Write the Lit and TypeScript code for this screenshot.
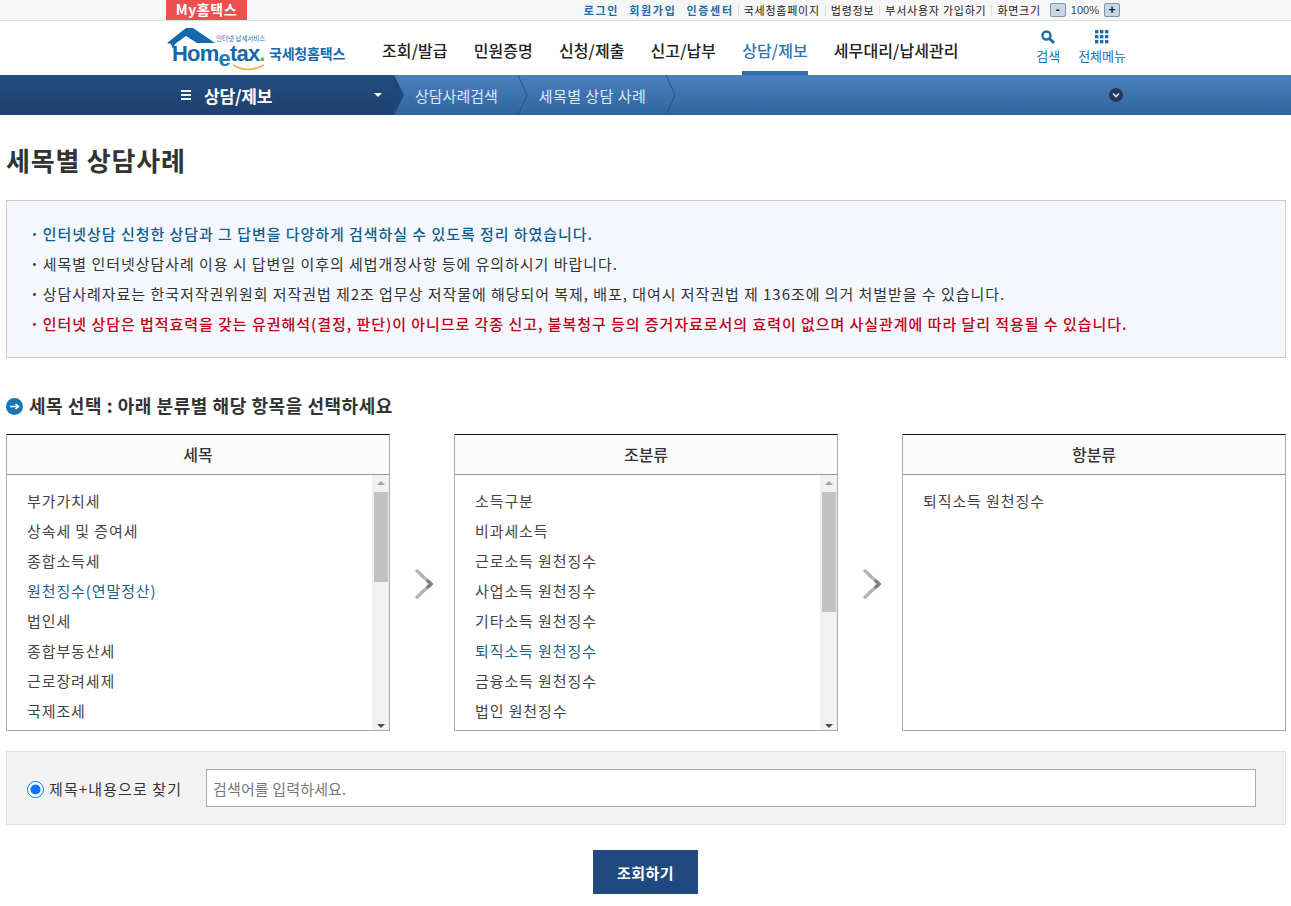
import { LitElement, html, css, svg } from "lit";
import { customElement } from "lit/decorators.js";
import { classMap } from "lit/directives/class-map.js";

const NAV = ["조회/발급", "민원증명", "신청/제출", "신고/납부", "상담/제보", "세무대리/납세관리"];
const NOTES = [
  { text: "인터넷상담 신청한 상담과 그 답변을 다양하게 검색하실 수 있도록 정리 하였습니다.", kind: "blue" },
  { text: "세목별 인터넷상담사례 이용 시 답변일 이후의 세법개정사항 등에 유의하시기 바랍니다.", kind: "" },
  { text: "상담사례자료는 한국저작권위원회 저작권법 제2조 업무상 저작물에 해당되어 복제, 배포, 대여시 저작권법 제 136조에 의거 처벌받을 수 있습니다.", kind: "" },
  { text: "인터넷 상담은 법적효력을 갖는 유권해석(결정, 판단)이 아니므로 각종 신고, 불복청구 등의 증거자료로서의 효력이 없으며 사실관계에 따라 달리 적용될 수 있습니다.", kind: "red" },
];
const PANELS = [
  {
    title: "세목",
    items: ["부가가치세", "상속세 및 증여세", "종합소득세", "원천징수(연말정산)", "법인세", "종합부동산세", "근로장려세제", "국제조세"],
    active: 3,
    thumb: 90,
  },
  {
    title: "조분류",
    items: ["소득구분", "비과세소득", "근로소득 원천징수", "사업소득 원천징수", "기타소득 원천징수", "퇴직소득 원천징수", "금융소득 원천징수", "법인 원천징수"],
    active: 5,
    thumb: 120,
  },
  { title: "항분류", items: ["퇴직소득 원천징수"], active: -1, thumb: 0 },
];

const chevron = svg`<path d="M3 3 L17 16 L3 29" fill="none" stroke="#b4b4b4" stroke-width="3.4" stroke-linecap="round" stroke-linejoin="round"/><path d="M14 13 L17 16 L14 19" fill="none" stroke="#808080" stroke-width="3.4" stroke-linecap="round"/>`;

@customElement("app-root")
export class AppRoot extends LitElement {
  static styles = css`
    :host {
      display: block;
      height: 906px;
      overflow: hidden;
      background: #fff;
      color: #333;
      font-family: "Noto Sans CJK KR", "Noto Sans", sans-serif;
    }

    .wrap {
      width: 960px;
      margin-left: 166px;
      display: flex;
      align-items: center;
    }

    .topbar {
      height: 20px;
      background: #f6f6f6;
      border-bottom: 1px solid #dcdcdc;
    }
    .topbar .wrap {
      height: 20px;
      justify-content: space-between;
    }
    .my {
      width: 81px;
      height: 20px;
      background: #ee5050;
      color: #fff;
      font-size: 14px;
      font-weight: 700;
      line-height: 18px;
      letter-spacing: 0.6px;
      text-align: center;
    }
    .util {
      display: flex;
      align-items: center;
      font-size: 11px;
      line-height: 18px;
      color: #222;
      margin-right: 6px;
      letter-spacing: 0.75px;
      white-space: nowrap;
    }
    .util b {
      color: #1b6ca8;
      font-weight: 700;
      margin-right: 10px;
      letter-spacing: 1.7px;
    }
    .util b:last-of-type {
      margin-right: 4px;
    }
    .util span {
      margin-right: 5px;
      padding-left: 5px;
      border-left: 1px solid #ddd;
      line-height: 11px;
    }
    .util .size {
      margin-right: 9px;
    }
    .zoom {
      width: 16px;
      height: 14px;
      border: 1px solid #7f93ab;
      border-radius: 2px;
      background: #c8d6e5;
      font: 700 12px/12px "Liberation Sans", sans-serif;
      letter-spacing: 0;
      text-align: center;
      color: #123;
      box-sizing: border-box;
    }
    .pct {
      margin: 0 5px;
      color: #444;
      font-size: 11px;
      letter-spacing: 0;
      font-family: "Liberation Sans", sans-serif;
    }

    .header {
      height: 54px;
    }
    .header .wrap {
      height: 54px;
    }
    .logo {
      position: relative;
      width: 180px;
      height: 54px;
      flex: none;
      color: #1668ae;
    }
    .roof {
      position: absolute;
      left: 0;
      top: 6px;
    }
    .slogan {
      position: absolute;
      left: 50px;
      top: 13px;
      font-size: 6.5px;
      line-height: 9px;
      color: #2a6fa8;
      white-space: nowrap;
    }
    .brand {
      position: absolute;
      left: 6px;
      top: 23px;
      font: 700 22px/20px "Liberation Sans", sans-serif;
      letter-spacing: -0.8px;
      white-space: nowrap;
    }
    .brand i {
      font-style: normal;
      color: #1d7ab8;
      position: relative;
      top: 5px;
    }
    .brand u {
      text-decoration: none;
      color: #6fae1e;
    }
    .brand-ko {
      position: absolute;
      left: 103px;
      top: 21px;
      font-size: 14px;
      font-weight: 700;
      line-height: 22px;
      letter-spacing: -0.2px;
      white-space: nowrap;
    }
    .smile {
      position: absolute;
      left: 66px;
      top: 43px;
    }
    .nav {
      display: flex;
      margin-left: 36px;
      height: 54px;
      flex: none;
    }
    .nav a {
      height: 54px;
      box-sizing: border-box;
      margin-right: 26px;
      font-size: 16px;
      font-weight: 500;
      line-height: 58px;
      color: #222;
      white-space: nowrap;
      letter-spacing: 0.1px;
    }
    .nav a.on {
      color: #2f75b5;
      border-bottom: 4px solid #2f6fb0;
    }
    .tools {
      display: flex;
      margin-left: auto;
      gap: 18px;
      font-size: 13px;
      color: #1f6ea8;
      text-align: center;
      line-height: 18px;
      align-self: flex-start;
      padding-top: 8px;
    }
    .tools svg {
      display: block;
      margin: 0 auto 2px;
    }

    .sub {
      height: 40px;
      background: linear-gradient(#4c80bd, #2f659f);
      position: relative;
    }
    .sub-left {
      position: absolute;
      left: 0;
      top: 0;
      width: 394px;
      height: 40px;
      background: linear-gradient(#234d80, #1c406f);
    }
    .sub .wrap {
      position: relative;
      height: 40px;
    }
    .cur {
      display: flex;
      align-items: center;
      width: 228px;
      flex: none;
      color: #fff;
      font-size: 17px;
      font-weight: 700;
      padding-left: 15px;
      box-sizing: border-box;
      letter-spacing: -0.2px;
    }
    .burger {
      width: 10px;
      height: 10px;
      margin-right: 13px;
      border-top: 2px solid #fff;
      border-bottom: 2px solid #fff;
      box-sizing: border-box;
      position: relative;
    }
    .burger::after {
      content: "";
      position: absolute;
      left: 0;
      right: 0;
      top: 2px;
      height: 2px;
      background: #fff;
    }
    .caret {
      margin-left: auto;
      margin-right: 12px;
      border: 4px solid transparent;
      border-top: 4px solid #fff;
      border-bottom: 0;
    }
    .crumb {
      display: flex;
      align-items: center;
      color: #dce8f5;
      font-size: 15px;
      height: 40px;
      white-space: nowrap;
    }
    .crumb svg {
      flex: none;
    }
    .crumb span {
      padding: 0 20px 0 11px;
      letter-spacing: 0.45px;
    }
    .crumb span.first {
      padding-left: 21px;
      letter-spacing: 0;
    }
    .more {
      position: absolute;
      right: 3px;
      top: 13px;
      width: 14px;
      height: 14px;
      border-radius: 50%;
      background: #24395a;
    }
    .more svg {
      display: block;
    }

    main {
      padding: 0 5px 0 6px;
    }
    h1 {
      margin: 0;
      padding-top: 25px;
      height: 60px;
      font-size: 26px;
      font-weight: 700;
      line-height: 40px;
      color: #333;
      letter-spacing: 0.8px;
    }
    .notes {
      height: 156px;
      border: 1px solid #c9ccd2;
      background: #f4f7fb;
      padding: 0 0 0 23px;
      box-sizing: content-box;
      margin: 0;
      list-style: none;
      display: flex;
      flex-direction: column;
      justify-content: center;
      font-size: 15px;
      letter-spacing: 0.95px;
      line-height: 30px;
      color: #333;
    }
    .notes li {
      white-space: nowrap;
    }
    .notes li::before {
      content: "·";
      font-weight: 700;
      margin-right: 3px;
    }
    .notes .blue {
      color: #125f8f;
      font-weight: 500;
    }
    .notes .red {
      color: #c4001a;
      font-weight: 500;
    }
    h2 {
      display: flex;
      align-items: center;
      margin: 35px 0 17px;
      height: 24px;
      font-size: 18px;
      font-weight: 700;
      line-height: 24px;
      color: #333;
      letter-spacing: 0.55px;
    }
    h2 svg {
      margin: 2px 6px 0 0;
    }
    .panels {
      display: grid;
      grid-template-columns: 384px 384px 384px;
      column-gap: 64px;
    }
    .panel {
      position: relative;
      height: 297px;
      box-sizing: border-box;
      border: 1px solid #aaa;
      border-top: 1px solid #111;
    }
    .panel h3 {
      margin: 0;
      height: 40px;
      box-sizing: border-box;
      border-bottom: 1px solid #999;
      background: #fbfbfb;
      font-size: 16px;
      font-weight: 500;
      line-height: 39px;
      text-align: center;
      color: #333;
    }
    .panel ul {
      margin: 0;
      padding: 11px 0 0 20px;
      list-style: none;
      font-size: 15px;
      letter-spacing: 0.9px;
      line-height: 30px;
      color: #444;
    }
    .panel li.on {
      color: #1d6289;
    }
    .scroll {
      position: absolute;
      right: 0;
      top: 40px;
      bottom: 0;
      width: 17px;
      background: #f1f1f1;
      display: flex;
      flex-direction: column;
      align-items: center;
    }
    .arrow {
      width: 0;
      height: 0;
      margin: 6px 0 7px;
      border: 4px solid transparent;
      border-top: 0;
      border-bottom: 4px solid #a3a3a3;
    }
    .arrow.down {
      margin: auto 0 2px;
      border-bottom: 0;
      border-top: 4px solid #505050;
    }
    .thumb {
      width: 14px;
      background: #c1c1c1;
    }
    .next {
      position: absolute;
      left: 100%;
      top: 133px;
      margin-left: 25px;
    }
    .search {
      display: flex;
      align-items: center;
      height: 74px;
      box-sizing: border-box;
      margin-top: 20px;
      border: 1px solid #e2e2e2;
      background: #f3f3f3;
      padding: 0 29px 0 20px;
      font-size: 15px;
      letter-spacing: 1.1px;
      color: #333;
    }
    .search input[type="radio"] {
      width: 17px;
      height: 17px;
      margin: 3px 5px 0 0;
      accent-color: #0a75ff;
    }
    .search label {
      width: 157px;
      flex: none;
      white-space: nowrap;
    }
    .search input[type="text"] {
      flex: 1;
      height: 38px;
      box-sizing: border-box;
      border: 1px solid #aaa;
      background: #fff;
      padding: 0 6px;
      font: 400 15px "Noto Sans CJK KR", sans-serif;
      letter-spacing: 0.15px;
    }
    .search input::placeholder {
      color: #777;
    }
    .actions {
      display: flex;
      justify-content: center;
      margin-top: 25px;
      padding-right: 1px;
    }
    button {
      width: 105px;
      height: 44px;
      border: 0;
      background: #204a7f;
      color: #fff;
      font: 700 15px "Noto Sans CJK KR", sans-serif;
      letter-spacing: 0.4px;
    }
  `;

  render() {
    return html`
      <div class="topbar">
        <div class="wrap">
          <div class="my">My홈택스</div>
          <div class="util">
            <b>로그인</b><b>회원가입</b><b>인증센터</b>
            <span>국세청홈페이지</span><span>법령정보</span><span>부서사용자 가입하기</span>
            <span class="size">화면크기</span>
            <div class="zoom">-</div>
            <div class="pct">100%</div>
            <div class="zoom">+</div>
          </div>
        </div>
      </div>
      <header class="header">
        <div class="wrap">
          <div class="logo">
            <svg class="roof" width="50" height="24" viewBox="0 0 50 24">
              <path d="M1 16 L20 1 L27 1 L49 16 L31 16 L20 9 L9 17 L7 22 L5 17 Z" fill="#1668ae" />
            </svg>
            <div class="slogan">인터넷 납세서비스</div>
            <div class="brand">Hom<i>e</i>tax<u>.</u></div>
            <svg class="smile" width="34" height="8" viewBox="0 0 34 8">
              <path d="M1 1 Q16 10 32 1" fill="none" stroke="#efb040" stroke-width="1.6" />
            </svg>
            <div class="brand-ko">국세청홈택스</div>
          </div>
          <nav class="nav">
            ${NAV.map((n) => html`<a class=${classMap({ on: n === "상담/제보" })}>${n}</a>`)}
          </nav>
          <div class="tools">
            <div>
              <svg width="16" height="16" viewBox="0 0 16 16">
                <circle cx="6.5" cy="6.5" r="4" fill="none" stroke="#1f6ea8" stroke-width="2.4" />
                <path d="M9.5 9.5 L14 14" stroke="#1f6ea8" stroke-width="3" />
              </svg>
              검색
            </div>
            <div>
              <svg width="16" height="16" viewBox="0 0 16 16" fill="#1f6ea8">
                ${[1, 6, 11].map((y) =>
                  [1, 6, 11].map((x) => svg`<rect x=${x} y=${y} width="3.4" height="3.4" />`)
                )}
              </svg>
              전체메뉴
            </div>
          </div>
        </div>
      </header>
      <div class="sub">
        <div class="sub-left"></div>
        <div class="wrap">
          <div class="cur"><div class="burger"></div>상담/제보<div class="caret"></div></div>
          <div class="crumb">
            <svg width="10" height="40" viewBox="0 0 10 40" style="margin-right:-10px">
              <path d="M0 0 L10 20 L0 40 Z" fill="#1f4677" />
            </svg>
            <span class="first">상담사례검색</span>
            <svg width="10" height="40" viewBox="0 0 10 40">
              <path d="M0 0 L9 20 L0 40" fill="none" stroke="#2a5488" />
            </svg>
            <span>세목별 상담 사례</span>
            <svg width="10" height="40" viewBox="0 0 10 40">
              <path d="M0 0 L9 20 L0 40" fill="none" stroke="#2a5488" />
            </svg>
          </div>
          <div class="more">
            <svg width="14" height="14" viewBox="0 0 14 14">
              <path d="M4 5.5 L7 8.5 L10 5.5" fill="none" stroke="#dfe6ee" stroke-width="1.6" />
            </svg>
          </div>
        </div>
      </div>
      <main>
        <h1>세목별 상담사례</h1>
        <ul class="notes">
          ${NOTES.map((n) => html`<li class=${n.kind}>${n.text}</li>`)}
        </ul>
        <h2>
          <svg width="17" height="17" viewBox="0 0 17 17">
            <circle cx="8.5" cy="8.5" r="8.5" fill="#1b75b5" />
            <path d="M4 8.5 H12 M9.5 6 L12.5 8.5 L9.5 11" fill="none" stroke="#fff" stroke-width="1.6" />
          </svg>
          세목 선택 : 아래 분류별 해당 항목을 선택하세요
        </h2>
        <div class="panels">
          ${PANELS.map(
            (p, i) => html`
              <section class="panel">
                <h3>${p.title}</h3>
                <ul>
                  ${p.items.map((it, k) => html`<li class=${classMap({ on: k === p.active })}>${it}</li>`)}
                </ul>
                ${p.thumb
                  ? html`<div class="scroll">
                      <div class="arrow"></div>
                      <div class="thumb" style="height:${p.thumb}px"></div>
                      <div class="arrow down"></div>
                    </div>`
                  : ""}
                ${i < 2
                  ? html`<svg class="next" width="20" height="32" viewBox="0 0 20 32">${chevron}</svg>`
                  : ""}
              </section>
            `
          )}
        </div>
        <div class="search">
          <input type="radio" checked />
          <label>제목+내용으로 찾기</label>
          <input type="text" placeholder="검색어를 입력하세요." />
        </div>
        <div class="actions"><button>조회하기</button></div>
      </main>
    `;
  }
}
